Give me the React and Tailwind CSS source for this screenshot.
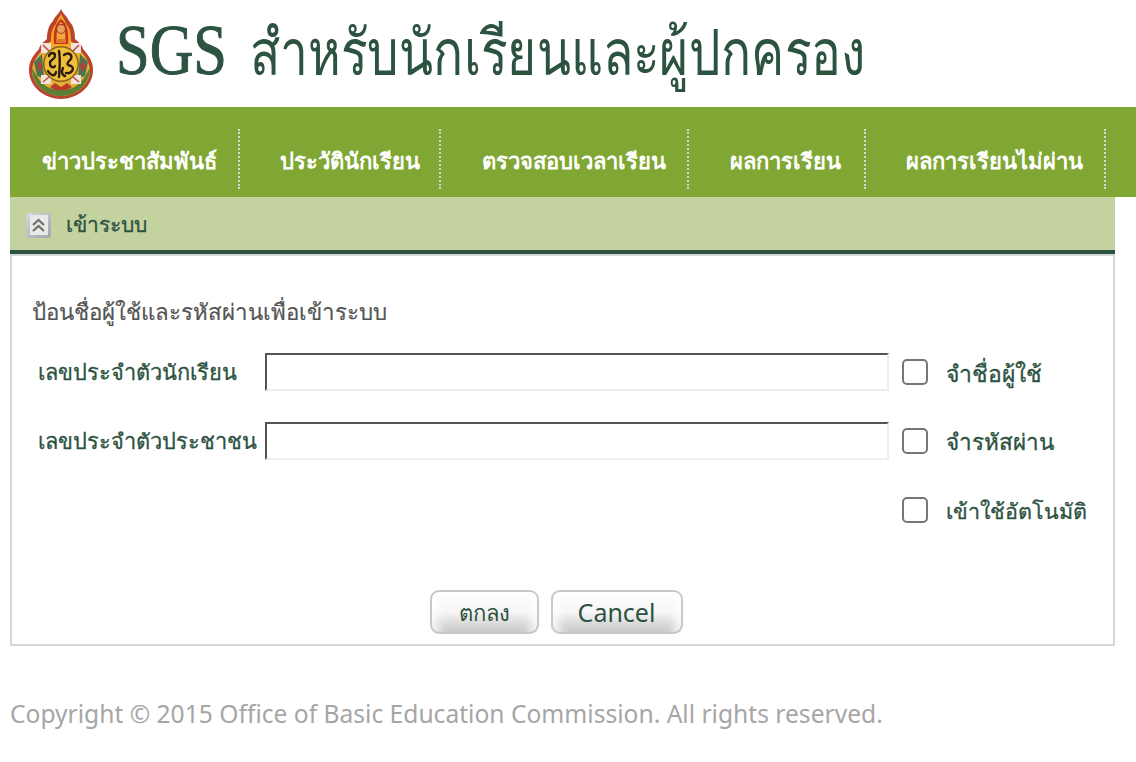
import React from 'react'

const navItems = [
  { label: 'ข่าวประชาสัมพันธ์', w: 'w-[230px]', pl: 'pl-[32px]' },
  { label: 'ประวัตินักเรียน', w: 'w-[201px]', pl: 'pl-[40px]' },
  { label: 'ตรวจสอบเวลาเรียน', w: 'w-[248px]', pl: 'pl-[41px]' },
  { label: 'ผลการเรียน', w: 'w-[177px]', pl: 'pl-[41px]' },
  { label: 'ผลการเรียนไม่ผ่าน', w: 'w-[240px]', pl: 'pl-[40px]' },
]

const Logo = () => (
  <svg viewBox="0 0 72 96" className="w-[72px] h-[96px] shrink-0">
    <path d="M36 3 C38 8 42 10 44 15 C49 20 50 27 50 33 C54 37 57 38 58 43 C64 50 68 55 68 64 C68 81 52 93 36 93 C20 93 4 81 4 64 C4 55 8 50 14 43 C15 38 18 37 22 33 C22 27 23 20 28 15 C30 10 34 8 36 3 Z" fill="#b9432f" />
    <path d="M36 8 C38 12 40 14 41 18 C45 22 46 28 46 35 C50 38 53 41 55 45 L17 45 C19 41 22 38 26 35 C26 28 27 22 31 18 C32 14 34 12 36 8 Z" fill="#f1a91f" />
    <path d="M36 13 C42 17 44 26 43 38 L29 38 C28 26 30 17 36 13 Z" fill="#c9301f" />
    <path d="M36 16 C40 19 41 27 40 36 L32 36 C31 27 32 19 36 16 Z" fill="#f0a83a" />
    <circle cx="36" cy="23" r="4.5" fill="#e8a05a" stroke="#a5341f" strokeWidth="1.2" />
    <path d="M31 33 H41 V37 H31 Z" fill="#d9782a" />
    <path d="M7 64 C8 54 14 46 22 41 L50 41 C58 46 64 54 65 64 C65 78 52 90 36 90 C20 90 7 78 7 64 Z" fill="#e3b232" />
    <path d="M7 62 C7 78 20 90 36 90 C52 90 65 78 65 62 L59 72 C52 82 44 84 36 84 C28 84 20 82 13 72 Z" fill="#5b7d34" />
    <path d="M9 56 L17 48 L19 72 L12 70 Z" fill="#4d7350" />
    <path d="M63 56 L55 48 L53 72 L60 70 Z" fill="#4d7350" />
    <path d="M14 55 L17 60 L15 66 L12 60 Z M58 55 L61 60 L58 66 L55 60 Z" fill="#b5403a" />
    <path d="M16 37 L26 37 L26 47 L16 47 Z M46 37 L56 37 L56 47 L46 47 Z M16 69 L26 69 L26 78 L16 78 Z M46 69 L56 69 L56 78 L46 78 Z" fill="#f3e3e0" />
    <path d="M18 39 L24 45 M54 39 L48 45 M18 76 L24 71 M54 76 L48 71" stroke="#c2503f" strokeWidth="1.6" />
    <circle cx="36" cy="58" r="18" fill="#8f5f1d" />
    <circle cx="36" cy="58" r="16.5" fill="#eebe3a" />
    <path d="M24 50 C25 46 30 46 30 50 C30 54 25 53 25 57 C25 62 29 62 30 60 M34 45 C35 51 35 60 34 71 M39 49 C44 45 49 50 45 54 C42 57 41 59 46 60 C50 62 47 68 41 67 M23 65 C26 70 30 71 31 66 M38 62 C36 66 37 69 40 70" fill="none" stroke="#2a1c0e" strokeWidth="2.4" strokeLinecap="round" />
    <path d="M25 81 L30 77 L36 81 L42 77 L47 81 L42 84 L30 84 Z" fill="#bd3b2a" />
  </svg>
)

const ChevronBox = () => (
  <div className="w-[25px] h-[25px] rounded-[3px] bg-gradient-to-br from-[#d8d8de] to-[#a3a3b2] flex items-center justify-center">
    <div className="w-[18px] h-[20px] bg-[#e9e9e9] flex items-center justify-center">
      <svg viewBox="0 0 15 15" className="w-[15px] h-[15px]" fill="none" stroke="#6d7268" strokeWidth="2.2">
        <path d="M2 7 L7.5 2 L13 7" />
        <path d="M2 13 L7.5 8 L13 13" />
      </svg>
    </div>
  </div>
)

const Check = ({ label, size }) => (
  <label className={`${size} flex items-center h-[38px] gap-[18px] text-[#2c5240] [-webkit-text-stroke:0.3px]`}>
    <input type="checkbox" className="appearance-none w-[26px] h-[26px] rounded-[5px] border-2 border-[#767676] bg-white" />
    <span className="whitespace-nowrap mt-[2px]">{label}</span>
  </label>
)

const Field = ({ label }) => (
  <div className="flex items-center h-[38px]">
    <div className="w-[233px] pl-[6px] text-[#2c5240] text-[21.8px] whitespace-nowrap [-webkit-text-stroke:0.3px]">{label}</div>
    <input type="text" className="w-[624px] h-[38px] border-2 border-t-[#555] border-l-[#555] border-r-[#eee] border-b-[#eee] bg-white" />
  </div>
)

const Btn = ({ children, w, size }) => (
  <button className={`${w} ${size} h-[44px] rounded-[9px] border-2 border-[#c9c9c9] text-[#2c5240] leading-none bg-gradient-to-b from-white via-[#f6f6f6] to-[#c6c6c6] shadow-[inset_14px_0_10px_-8px_#ffffffcc,inset_-14px_0_10px_-8px_#ffffffcc]`}>
    {children}
  </button>
)

export default function App() {
  return (
    <div className="w-[1136px] h-[762px] bg-white overflow-hidden font-['Noto_Sans','Open_Sans',sans-serif]">
      <header className="h-[107px] pl-[25px] pt-[6px] flex items-start">
        <Logo />
        <h1 className="ml-[19px] flex text-[#2c5240] whitespace-nowrap font-normal">
          <span className="w-[134px] text-[72px] leading-[82px] mt-[3px] origin-left scale-x-[.84] font-['Liberation_Serif',serif] [-webkit-text-stroke:1px]">SGS</span>
          <span className="text-[64px] leading-[88px] mt-[1px] origin-left scale-x-[.777] font-['Noto_Sans',sans-serif]">สำหรับนักเรียนและผู้ปกครอง</span>
        </h1>
      </header>

      <nav className="ml-[10px] h-[90px] bg-[#80a733] flex items-start pt-[22px]">
        {navItems.map((item) => (
          <div key={item.label} className={`${item.w} ${item.pl} h-[60px] border-r-2 border-dotted border-[#d6d6d0] flex items-center pt-[3px] text-white text-[22px] font-bold whitespace-nowrap`}>
            {item.label}
          </div>
        ))}
      </nav>

      <main className="ml-[10px] w-[1105px]">
        <div className="h-[57px] bg-[#c4d2a0] border-b-4 border-[#2c5240] flex items-center pl-[16px] gap-[15px] pt-[3px] text-[#2c5240] text-[21px] [-webkit-text-stroke:0.3px]">
          <ChevronBox />
          <span>เข้าระบบ</span>
        </div>
        <section className="h-[392px] border-2 border-[#d5d5d5] pl-[20px]">
          <p className="pt-[41px] h-[97px] text-[#555] text-[22.3px] leading-[30px] [-webkit-text-stroke:0.2px]">ป้อนชื่อผู้ใช้และรหัสผ่านเพื่อเข้าระบบ</p>
          <div className="flex">
            <div className="flex flex-col gap-[31px] w-[870px]">
              <Field label="เลขประจำตัวนักเรียน" />
              <Field label="เลขประจำตัวประชาชน" />
            </div>
            <div className="flex flex-col gap-[31px]">
              <Check label="จำชื่อผู้ใช้" size="text-[23px]" />
              <Check label="จำรหัสผ่าน" size="text-[22.5px]" />
              <Check label="เข้าใช้อัตโนมัติ" size="text-[21.5px]" />
            </div>
          </div>
          <div className="flex justify-center gap-[12px] mt-[61px] pr-[33px]">
            <Btn w="w-[109px]" size="text-[22px]">ตกลง</Btn>
            <Btn w="w-[132px]" size="text-[25px]">Cancel</Btn>
          </div>
        </section>
      </main>

      <footer className="ml-[10px] mt-[51px] text-[#a6a6a6] text-[24.6px] leading-[34px] whitespace-nowrap">
        Copyright © 2015 Office of Basic Education Commission. All rights reserved.
      </footer>
    </div>
  )
}
